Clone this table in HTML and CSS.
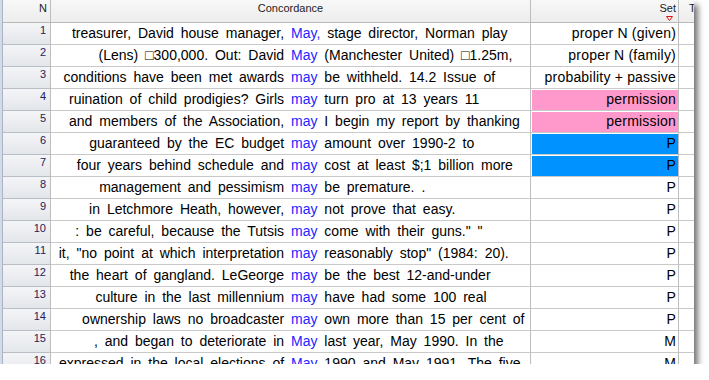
FILE: index.html
```html
<!DOCTYPE html>
<html>
<head>
<meta charset="utf-8">
<link rel="stylesheet" href="styles.css">
</head>
<body>
<div class="window">
  <div class="row head">
    <div class="c n">N</div>
    <div class="c conc-h">Concordance</div>
    <div class="c set-h"><span>Set</span><svg class="sort" width="7" height="5" viewBox="0 0 7 5"><path d="M0.5 0.5 H6.5 L3.5 4.5 Z" fill="none" stroke="#e01010" stroke-width="1"/></svg></div>
    <div class="c t">T</div>
  </div>
  <div class="row"><div class="c n">1</div><div class="c conc"><span class="l"><span>treasurer, David house manager, </span></span><span class="k">May,</span><span class="r"> stage director, Norman play</span></div><div class="c set"><span class="v">proper N (given)</span></div><div class="c t"></div></div>
  <div class="row"><div class="c n">2</div><div class="c conc"><span class="l"><span>(Lens) □300,000. Out: David </span></span><span class="k">May</span><span class="r"> (Manchester United) □1.25m,</span></div><div class="c set"><span class="v">proper N (family)</span></div><div class="c t"></div></div>
  <div class="row"><div class="c n">3</div><div class="c conc"><span class="l"><span>conditions have been met awards </span></span><span class="k">may</span><span class="r"> be withheld. 14.2 Issue of</span></div><div class="c set"><span class="v">probability + passive</span></div><div class="c t"></div></div>
  <div class="row"><div class="c n">4</div><div class="c conc"><span class="l"><span>ruination of child prodigies? Girls </span></span><span class="k">may</span><span class="r"> turn pro at 13 years 11</span></div><div class="c set"><span class="v pink">permission</span></div><div class="c t"></div></div>
  <div class="row"><div class="c n">5</div><div class="c conc"><span class="l"><span>and members of the Association, </span></span><span class="k">may</span><span class="r"> I begin my report by thanking</span></div><div class="c set"><span class="v pink">permission</span></div><div class="c t"></div></div>
  <div class="row"><div class="c n">6</div><div class="c conc"><span class="l"><span>guaranteed by the EC budget </span></span><span class="k">may</span><span class="r"> amount over 1990-2 to</span></div><div class="c set"><span class="v blue">P</span></div><div class="c t"></div></div>
  <div class="row"><div class="c n">7</div><div class="c conc"><span class="l"><span>four years behind schedule and </span></span><span class="k">may</span><span class="r"> cost at least $;1 billion more</span></div><div class="c set"><span class="v blue">P</span></div><div class="c t"></div></div>
  <div class="row"><div class="c n">8</div><div class="c conc"><span class="l"><span>management and pessimism </span></span><span class="k">may</span><span class="r"> be premature. .</span></div><div class="c set"><span class="v">P</span></div><div class="c t"></div></div>
  <div class="row"><div class="c n">9</div><div class="c conc"><span class="l"><span>in Letchmore Heath, however, </span></span><span class="k">may</span><span class="r"> not prove that easy.</span></div><div class="c set"><span class="v">P</span></div><div class="c t"></div></div>
  <div class="row"><div class="c n">10</div><div class="c conc"><span class="l"><span>: be careful, because the Tutsis </span></span><span class="k">may</span><span class="r"> come with their guns." "</span></div><div class="c set"><span class="v">P</span></div><div class="c t"></div></div>
  <div class="row"><div class="c n">11</div><div class="c conc"><span class="l"><span>it, "no point at which interpretation </span></span><span class="k">may</span><span class="r"> reasonably stop" (1984: 20).</span></div><div class="c set"><span class="v">P</span></div><div class="c t"></div></div>
  <div class="row"><div class="c n">12</div><div class="c conc"><span class="l"><span>the heart of gangland. LeGeorge </span></span><span class="k">may</span><span class="r"> be the best 12-and-under</span></div><div class="c set"><span class="v">P</span></div><div class="c t"></div></div>
  <div class="row"><div class="c n">13</div><div class="c conc"><span class="l"><span>culture in the last millennium </span></span><span class="k">may</span><span class="r"> have had some 100 real</span></div><div class="c set"><span class="v">P</span></div><div class="c t"></div></div>
  <div class="row"><div class="c n">14</div><div class="c conc"><span class="l"><span>ownership laws no broadcaster </span></span><span class="k">may</span><span class="r"> own more than 15 per cent of</span></div><div class="c set"><span class="v">P</span></div><div class="c t"></div></div>
  <div class="row"><div class="c n">15</div><div class="c conc"><span class="l"><span>, and began to deteriorate in </span></span><span class="k">May</span><span class="r"> last year, May 1990. In the</span></div><div class="c set"><span class="v">M</span></div><div class="c t"></div></div>
  <div class="row"><div class="c n">16</div><div class="c conc"><span class="l"><span>expressed in the local elections of </span></span><span class="k">May</span><span class="r"> 1990 and May 1991. The five</span></div><div class="c set"><span class="v">M</span></div><div class="c t"></div></div>
</div>
</body>
</html>
```
FILE: styles.css
```css
html, body {
  margin: 0;
  padding: 0;
  background: #ffffff;
}

.window {
  width: 692px;
  height: 364px;
  overflow: hidden;
  border-left: 2px solid #d3dbe6;
  background: #ffffff;
  box-shadow: 4px 5px 6px rgba(0, 0, 0, 0.55);
  font-family: "Liberation Sans", Arial, sans-serif;
  color: #000000;
}

.row {
  display: flex;
  height: 22px;
}

.row.head {
  height: 23px;
  background: linear-gradient(#f8f8f8, #ececec);
}

.c {
  box-sizing: border-box;
  flex: none;
  height: 100%;
  overflow: hidden;
  white-space: nowrap;
  border-right: 1px solid #bdbdbd;
  border-bottom: 1px solid #c9c9c9;
}

.n {
  width: 49px;
  border-left: 1px solid #a9b5c6;
  background: linear-gradient(#f4f5f7, #e3e6ea);
  border-bottom-color: #b9bec6;
  text-align: right;
  padding: 1px 4px 0 0;
  font-size: 11px;
  line-height: 12px;
  color: #26205a;
}

.head .c {
  font-size: 11px;
  line-height: 13px;
  padding-top: 2px;
  color: #1c1c1c;
  background: transparent;
  border-bottom-color: #b9b9b9;
}

.head .n {
  padding-right: 3px;
}

.conc-h {
  width: 480px;
  text-align: center;
}

.set-h {
  width: 148px;
  display: flex;
  flex-direction: column;
  align-items: flex-end;
  padding-right: 2px;
}

.sort {
  display: block;
  margin: 1px 3px 0 0;
}

.t {
  width: 15px;
  border-right: none;
  padding-left: 10px;
}

.conc {
  width: 480px;
  display: flex;
  font-size: 14px;
  line-height: 20px;
  word-spacing: 3px;
}

.l {
  width: 240px;
  flex: none;
  display: flex;
  justify-content: flex-end;
  overflow: hidden;
}

.l span {
  flex: none;
  white-space: pre;
}

.k {
  color: #2424ff;
  white-space: pre;
}

.r {
  white-space: pre;
}

.set {
  width: 148px;
  padding: 1px 0 0 1px;
}

.v {
  display: block;
  height: 20px;
  line-height: 18px;
  font-size: 14px;
  letter-spacing: 0.2px;
  text-align: right;
  padding-right: 2px;
}

.v.pink {
  background: #ff99cc;
}

.v.blue {
  background: #0092ff;
}
```
